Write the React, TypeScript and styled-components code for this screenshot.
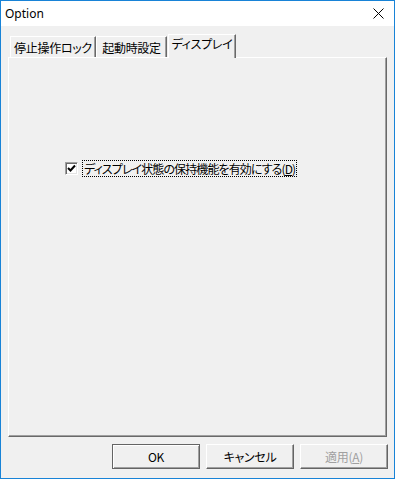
import React from "react";
import styled, { createGlobalStyle } from "styled-components";

const GlobalStyle = createGlobalStyle`
	html, body {
		margin: 0;
		padding: 0;
		background: #f0f0f0;
	}
	* {
		box-sizing: border-box;
	}
`;

const Window = styled.div`
	width: 395px;
	height: 479px;
	border: 1px solid #1883d7;
	display: flex;
	flex-direction: column;
	background: #f0f0f0;
	font-family: "Noto Sans CJK JP", "Noto Sans", sans-serif;
	font-size: 12px;
	color: #000;
	font-feature-settings: "palt";
`;

const TitleBar = styled.div`
	height: 25px;
	background: #fff;
	display: flex;
	align-items: center;
	justify-content: space-between;
	padding: 0 10px 0 4px;
`;

const Title = styled.span`
	font-family: "Noto Sans", sans-serif;
	font-size: 12px;
	line-height: 1;
	margin-top: 1px;
`;

const CloseIcon = () => (
	<svg width="11" height="11" viewBox="0 0 11 11">
		<path d="M0.5 0.5 L10.5 10.5 M10.5 0.5 L0.5 10.5" stroke="#000" strokeWidth="1" />
	</svg>
);

const Body = styled.div`
	flex: 1;
	display: flex;
	flex-direction: column;
	padding: 8px 7px 9px 7px;
`;

const TabStrip = styled.div`
	height: 23px;
	display: flex;
	align-items: flex-end;
	padding-left: 2px;
	position: relative;
	z-index: 1;
`;

const Tab = styled.div<{ $active?: boolean; $w: number }>`
	width: ${(p) => p.$w}px;
	height: ${(p) => (p.$active ? 24 : 21)}px;
	margin-left: ${(p) => (p.$active ? 1 : 0)}px;
	margin-bottom: ${(p) => (p.$active ? -1 : 0)}px;
	background: #f0f0f0;
	border-top: 1px solid #fff;
	border-left: 1px solid #fff;
	border-right: 1px solid #696969;
	box-shadow: inset -1px 0 0 #a0a0a0;
	display: flex;
	align-items: ${(p) => (p.$active ? "flex-start" : "center")};
	padding-top: ${(p) => (p.$active ? 3 : 1)}px;
	justify-content: center;
	white-space: nowrap;
	line-height: 1;
	letter-spacing: -0.3px;
`;

const Panel = styled.div`
	flex: 1;
	border-top: 1px solid #fff;
	border-left: 1px solid #fff;
	border-right: 1px solid #696969;
	border-bottom: 1px solid #696969;
	box-shadow: inset -1px -1px 0 #a0a0a0;
	padding: 102px 0 0 56px;
`;

const CheckRow = styled.label`
	display: flex;
	align-items: center;
	gap: 4px;
`;

const CheckBox = styled.span`
	width: 13px;
	height: 13px;
	background: #fff;
	border-top: 1px solid #a0a0a0;
	border-left: 1px solid #a0a0a0;
	border-right: 1px solid #fff;
	border-bottom: 1px solid #fff;
	box-shadow: inset 1px 1px 0 #696969, inset -1px -1px 0 #e3e3e3;
	display: flex;
	align-items: center;
	justify-content: center;
`;

const FocusLabel = styled.span`
	border: 1px dotted #000;
	padding: 1px;
	line-height: 13px;
	letter-spacing: -0.9px;
`;

const ButtonRow = styled.div`
	margin-top: 7px;
	margin-right: -1px;
	display: flex;
	justify-content: flex-end;
	gap: 6px;
`;

const Button = styled.button<{ $default?: boolean }>`
	width: 88px;
	height: 25px;
	font-family: "Noto Sans CJK JP", "Noto Sans", sans-serif;
	font-feature-settings: "palt";
	font-size: 12px;
	letter-spacing: -0.3px;
	background: #f0f0f0;
	color: ${(p) => (p.disabled ? "#a0a0a0" : "#000")};
	border: 1px solid ${(p) => (p.$default ? "#646464" : "#fff")};
	border-right-color: #646464;
	border-bottom-color: #646464;
	box-shadow: ${(p) =>
		p.$default
			? "inset 1px 1px 0 #fff, inset -1px -1px 0 #a0a0a0"
			: "inset -1px -1px 0 #a0a0a0"};
	padding: 0;
	line-height: 1;
`;

const App = () => (
	<>
		<GlobalStyle />
		<Window>
			<TitleBar>
				<Title>Option</Title>
				<CloseIcon />
			</TitleBar>
			<Body>
				<TabStrip>
					<Tab $w={86}>停止操作ロック</Tab>
					<Tab $w={71}>起動時設定</Tab>
					<Tab $w={68} $active>
						ディスプレイ
					</Tab>
				</TabStrip>
				<Panel>
					<CheckRow>
						<CheckBox>
							<svg width="9" height="9" viewBox="0 0 9 9">
								<path d="M1 4 L3.5 6.5 L8 1.5" stroke="#000" strokeWidth="2" fill="none" />
							</svg>
						</CheckBox>
						<FocusLabel>
							ディスプレイ状態の保持機能を有効にする(<u>D</u>)
						</FocusLabel>
					</CheckRow>
				</Panel>
				<ButtonRow>
					<Button $default>OK</Button>
					<Button>キャンセル</Button>
					<Button disabled>
						適用(<u>A</u>)
					</Button>
				</ButtonRow>
			</Body>
		</Window>
	</>
);

export default App;
